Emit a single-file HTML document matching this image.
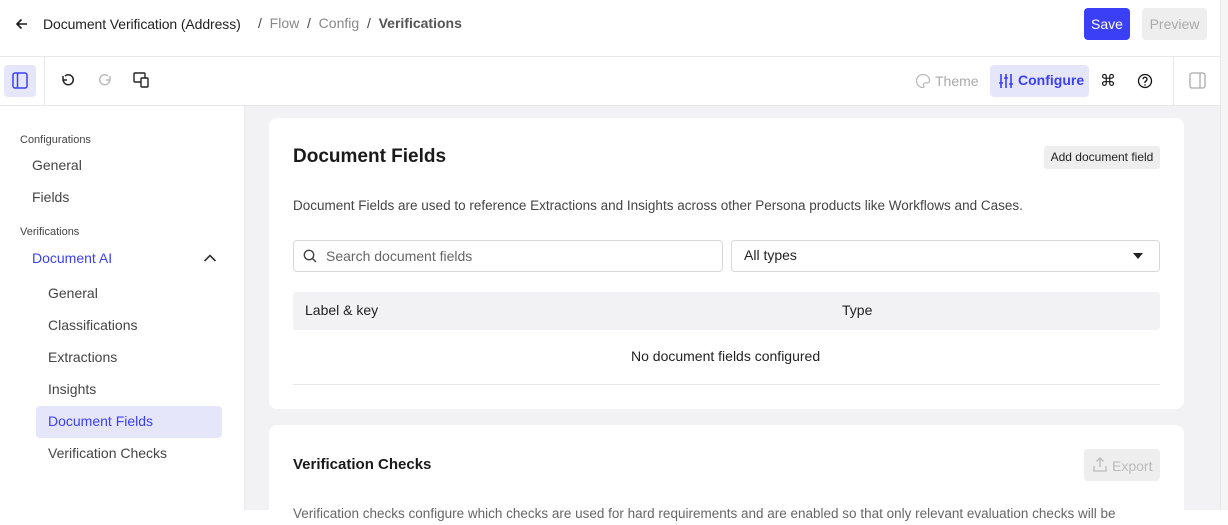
<!DOCTYPE html>
<html><head><style>
*{box-sizing:border-box;margin:0;padding:0}
body{width:1228px;height:510px;overflow:hidden;font-family:"Liberation Sans",sans-serif;color:#1a1a1a;background:#fff;position:relative;font-size:14px}
.a{position:absolute}
.t{position:absolute;white-space:nowrap}
</style></head><body>
<svg class="a" style="left:14px;top:16px" width="16" height="16" viewBox="0 0 16 16"><path d="M13 8H3M7.5 3.5 3 8l4.5 4.5" stroke="#1a1a1a" stroke-width="1.6" fill="none"/></svg>
<div class="t" style="left:43px;top:16px;font-size:14px;color:#222;letter-spacing:-0.1px">Document Verification (Address)</div>
<div class="t" style="left:258px;top:15px;font-size:14px;color:#888"><span style="color:#444">/</span>&nbsp; Flow &nbsp;<span style="color:#444">/</span>&nbsp; Config &nbsp;<span style="color:#444">/</span>&nbsp; <b style="color:#555">Verifications</b></div>
<div class="a" style="left:1084px;top:8px;width:46px;height:32px;background:#3b3ff5;border-radius:4px;color:#fff;font-size:14px;text-align:center;line-height:32px">Save</div>
<div class="a" style="left:1142px;top:8px;width:65px;height:32px;background:#eee;border-radius:4px;color:#aaa;font-size:14px;text-align:center;line-height:32px">Preview</div>
<div class="a" style="left:0;top:56px;width:1220px;height:1px;background:#e8e8e8"></div>
<div class="a" style="left:1220px;top:0;width:8px;height:510px;background:#f5f5f5;border-left:1px solid #e5e5e5"></div>
<div class="a" style="left:4px;top:65px;width:32px;height:32px;background:#e6e6fb;border-radius:4px"></div>
<svg class="a" style="left:12px;top:72px" width="16" height="17" viewBox="0 0 16 17"><rect x="1" y="1" width="14" height="15" rx="2" stroke="#3b3ff5" stroke-width="1.5" fill="none"/><path d="M5.5 1v15" stroke="#3b3ff5" stroke-width="1.5"/></svg>
<div class="a" style="left:44px;top:57px;width:1px;height:48px;background:#e8e8e8"></div>
<svg class="a" style="left:60px;top:72px" width="16" height="16" viewBox="0 0 16 16"><path d="M3 4v4h4M3.3 8A5 5 0 1 0 5 4" stroke="#222" stroke-width="1.5" fill="none"/></svg>
<svg class="a" style="left:97px;top:72px" width="16" height="16" viewBox="0 0 16 16"><path d="M13 4v4H9M12.7 8A5 5 0 1 1 11 4" stroke="#bbb" stroke-width="1.5" fill="none"/></svg>
<svg class="a" style="left:133px;top:72px" width="17" height="16" viewBox="0 0 17 16"><rect x="1" y="1" width="11" height="9" rx="1" stroke="#222" stroke-width="1.4" fill="none"/><rect x="8" y="6" width="7" height="9" rx="1" stroke="#222" stroke-width="1.4" fill="#fff"/></svg>
<svg class="a" style="left:915px;top:73px" width="16" height="16" viewBox="0 0 16 16"><path d="M8 1.5a6.5 6.5 0 1 0 0 13c1 0 1-1 .5-1.8S8.7 10 10 10h2a2.5 2.5 0 0 0 2.5-2.5C14.5 4 11.5 1.5 8 1.5z" stroke="#bbb" stroke-width="1.3" fill="none"/></svg>
<div class="t" style="left:935px;top:73px;color:#aaa;font-size:14px">Theme</div>
<div class="a" style="left:990px;top:65px;width:99px;height:32px;background:#e6e6fb;border-radius:4px"></div>
<svg class="a" style="left:998px;top:73px" width="16" height="16" viewBox="0 0 16 16" stroke="#3b3ff5" stroke-width="1.6"><path d="M3 1v14M8 1v14M13 1v14"/><path d="M1 10h4M6 5h4M11 11h4"/></svg>
<div class="t" style="left:1018px;top:72px;color:#3b3ff5;font-size:14px;font-weight:bold">Configure</div>
<div class="t" style="left:1100px;top:71px;font-size:16px;color:#111">⌘</div>
<svg class="a" style="left:1137px;top:73px" width="16" height="16" viewBox="0 0 16 16"><circle cx="8" cy="8" r="6.5" stroke="#111" stroke-width="1.3" fill="none"/><path d="M6 6.3a2 2 0 1 1 2.5 1.9c-.4.2-.5.5-.5 1V10" stroke="#111" stroke-width="1.3" fill="none"/><circle cx="8" cy="12" r=".8" fill="#111"/></svg>
<div class="a" style="left:1173px;top:57px;width:1px;height:48px;background:#e8e8e8"></div>
<svg class="a" style="left:1189px;top:72px" width="17" height="17" viewBox="0 0 17 17"><rect x="1" y="1" width="15" height="15" rx="2" stroke="#aaa" stroke-width="1.3" fill="none"/><path d="M11 1v15" stroke="#aaa" stroke-width="1.3"/></svg>
<div class="a" style="left:0;top:105px;width:1220px;height:1px;background:#e8e8e8"></div>
<div class="a" style="left:244px;top:106px;width:1px;height:404px;background:#e8e8e8"></div>
<div class="t" style="left:20px;top:134px;font-size:11px;color:#444">Configurations</div>
<div class="t" style="left:32px;top:157px;color:#444">General</div>
<div class="t" style="left:32px;top:189px;color:#444">Fields</div>
<div class="t" style="left:20px;top:226px;font-size:11px;color:#444">Verifications</div>
<div class="t" style="left:32px;top:250px;color:#3b3ff5">Document AI</div>
<svg class="a" style="left:203px;top:253px" width="14" height="10" viewBox="0 0 14 10"><path d="M1.5 8 7 2.5 12.5 8" stroke="#333" stroke-width="1.6" fill="none"/></svg>
<div class="t" style="left:48px;top:285px;color:#444">General</div>
<div class="t" style="left:48px;top:317px;color:#444">Classifications</div>
<div class="t" style="left:48px;top:349px;color:#444">Extractions</div>
<div class="t" style="left:48px;top:381px;color:#444">Insights</div>
<div class="a" style="left:36px;top:406px;width:186px;height:32px;background:#e6e6fb;border-radius:4px"></div>
<div class="t" style="left:48px;top:413px;color:#3b3ff5">Document Fields</div>
<div class="t" style="left:48px;top:445px;color:#444">Verification Checks</div>
<div class="a" style="left:245px;top:106px;width:975px;height:404px;background:#f2f2f4"></div>
<div class="a" style="left:269px;top:118px;width:915px;height:291px;background:#fff;border-radius:8px"></div>
<div class="t" style="left:293px;top:146px;font-size:19px;font-weight:bold;color:#1a1a1a">Document Fields</div>
<div class="a" style="left:1044px;top:146px;width:116px;height:23px;background:#eee;border-radius:3px;font-size:12px;color:#222;text-align:center;line-height:23px">Add document field</div>
<div class="t" style="left:293px;top:198px;font-size:13.5px;color:#444">Document Fields are used to reference Extractions and Insights across other Persona products like Workflows and Cases.</div>
<div class="a" style="left:293px;top:240px;width:430px;height:32px;border:1px solid #d8d8d8;border-radius:4px"></div>
<svg class="a" style="left:303px;top:249px" width="14" height="14" viewBox="0 0 14 14"><circle cx="6" cy="6" r="4.7" stroke="#444" stroke-width="1.4" fill="none"/><path d="M9.5 9.5 13 13" stroke="#444" stroke-width="1.4"/></svg>
<div class="t" style="left:326px;top:248px;color:#666">Search document fields</div>
<div class="a" style="left:731px;top:240px;width:429px;height:32px;border:1px solid #d8d8d8;border-radius:4px"></div>
<div class="t" style="left:744px;top:247px;color:#222">All types</div>
<svg class="a" style="left:1133px;top:253px" width="10" height="6" viewBox="0 0 10 6"><path d="M0 0h10L5 6z" fill="#222"/></svg>
<div class="a" style="left:293px;top:292px;width:867px;height:38px;background:#f2f2f4;border-radius:3px"></div>
<div class="t" style="left:305px;top:302px;color:#222">Label &amp; key</div>
<div class="t" style="left:842px;top:302px;color:#222">Type</div>
<div class="t" style="left:631px;top:348px;color:#222">No document fields configured</div>
<div class="a" style="left:293px;top:384px;width:867px;height:1px;background:#e8e8e8"></div>
<div class="a" style="left:269px;top:425px;width:915px;height:100px;background:#fff;border-radius:8px"></div>
<div class="t" style="left:293px;top:456px;font-size:15px;font-weight:bold;color:#1a1a1a">Verification Checks</div>
<div class="a" style="left:1084px;top:449px;width:76px;height:32px;background:#eee;border-radius:4px"></div>
<svg class="a" style="left:1093px;top:457px" width="14" height="15" viewBox="0 0 14 15"><path d="M7 10V1M3.5 4.5 7 1l3.5 3.5M1 9v5h12V9" stroke="#bbb" stroke-width="1.3" fill="none"/></svg>
<div class="t" style="left:1112px;top:458px;color:#bbb">Export</div>
<div class="t" style="left:293px;top:506px;font-size:13.5px;color:#666">Verification checks configure which checks are used for hard requirements and are enabled so that only relevant evaluation checks will be</div>
</body></html>
